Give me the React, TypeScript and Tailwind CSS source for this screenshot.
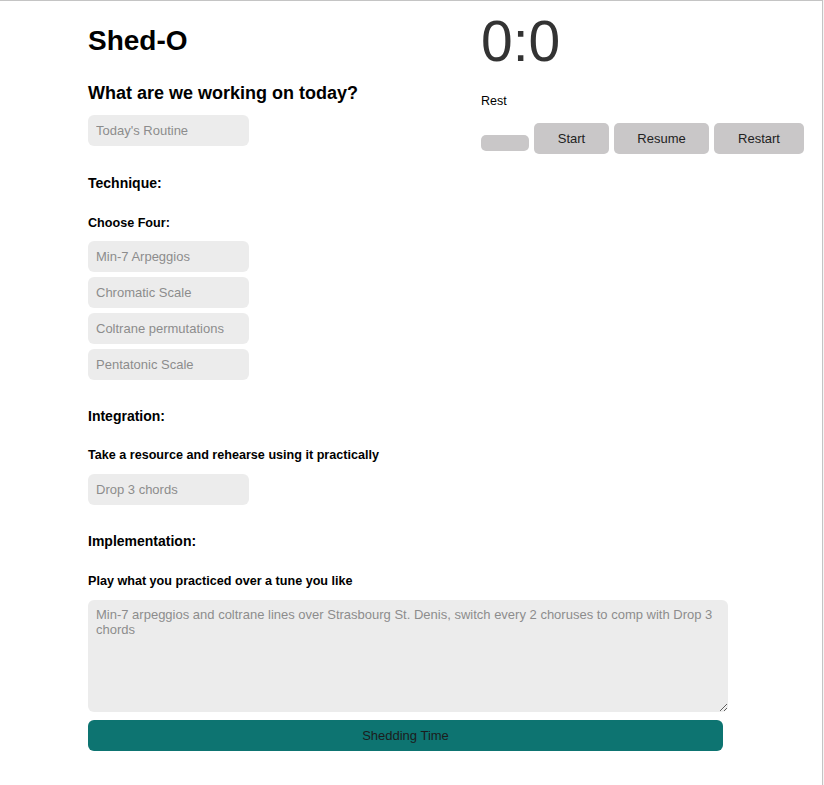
import React from 'react'

const font = { fontFamily: '"Liberation Sans", Arial, sans-serif' }

function Field({ placeholder }: { placeholder: string }) {
  return (
    <input
      type="text"
      placeholder={placeholder}
      className="block h-[31px] w-[161px] rounded-[6px] bg-[#ececec] px-2 text-[13px] text-[#222] placeholder:text-[#8c8c8c] outline-none"
    />
  )
}

export default function App() {
  const technique = ['Min-7 Arpeggios', 'Chromatic Scale', 'Coltrane permutations', 'Pentatonic Scale']

  return (
    <div className="min-h-[785px] w-[824px] bg-[#f5f5f5]" style={font}>
      <div className="min-h-[785px] w-[823px] border-t border-r border-[#c4c4c4] bg-white pl-[88px] text-black">
        <div className="flex">
          {/* left: routine form */}
          <div className="w-[393px]">
            <h1 className="mt-[24px] text-[28px] font-bold leading-[32px]">Shed-O</h1>
            <h2 className="mt-[25px] text-[18px] font-bold leading-[22px]">What are we working on today?</h2>
            <div className="mt-[11px]">
              <Field placeholder="Today's Routine" />
            </div>

            <h3 className="mt-[28px] text-[14px] font-bold leading-[18px]">Technique:</h3>
            <h4 className="mt-[23px] text-[12.6px] font-bold leading-[16px]">Choose Four:</h4>
            <div className="mt-[10px] flex flex-col gap-[5px]">
              {technique.map((t) => (
                <Field key={t} placeholder={t} />
              ))}
            </div>

            <h3 className="mt-[27px] text-[14px] font-bold leading-[18px]">Integration:</h3>
            <h4 className="mt-[22px] text-[12.6px] font-bold leading-[16px]">Take a resource and rehearse using it practically</h4>
            <div className="mt-[11px]">
              <Field placeholder="Drop 3 chords" />
            </div>

            <h3 className="mt-[27px] text-[14px] font-bold leading-[18px]">Implementation:</h3>
            <h4 className="mt-[23px] text-[12.6px] font-bold leading-[16px]">Play what you practiced over a tune you like</h4>
          </div>

          {/* right: timer */}
          <div>
            <div className="mt-[12px] text-[57px] leading-none text-[#333]">0:0</div>
            <p className="mt-[23px] text-[12.5px] leading-[16px]">Rest</p>
            <div className="mt-[14px] flex items-start gap-[5px]">
              <button className="mt-[12px] h-[16px] w-[48px] rounded-[5px] bg-[#c9c7c8]" />
              <button className="h-[31px] w-[75px] rounded-[5px] bg-[#c9c7c8] text-[13px] text-[#222]">Start</button>
              <button className="h-[31px] w-[95px] rounded-[5px] bg-[#c9c7c8] text-[13px] text-[#222]">Resume</button>
              <button className="h-[31px] w-[90px] rounded-[5px] bg-[#c9c7c8] text-[13px] text-[#222]">Restart</button>
            </div>
          </div>
        </div>

        <textarea
          placeholder="Min-7 arpeggios and coltrane lines over Strasbourg St. Denis, switch every 2 choruses to comp with Drop 3 chords"
          className="mt-[11px] block h-[112px] w-[640px] rounded-[6px] bg-[#ececec] px-2 py-[7px] text-[13px] leading-[15px] text-[#222] placeholder:text-[#8c8c8c] outline-none"
        />
        <button className="mt-[8px] block h-[31px] w-[635px] rounded-[6px] bg-[#0d7471] text-[13px] text-[#1c1c1c]">
          Shedding Time
        </button>
      </div>
    </div>
  )
}
